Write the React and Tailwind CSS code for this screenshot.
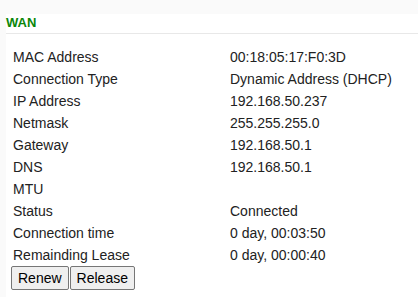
export default function App() {
  const rows = [
    ["MAC Address", "00:18:05:17:F0:3D"],
    ["Connection Type", "Dynamic Address (DHCP)"],
    ["IP Address", "192.168.50.237"],
    ["Netmask", "255.255.255.0"],
    ["Gateway", "192.168.50.1"],
    ["DNS", "192.168.50.1"],
    ["MTU", ""],
    ["Status", "Connected"],
    ["Connection time", "0 day, 00:03:50"],
    ["Remainding Lease", "0 day, 00:00:40"],
  ];
  return (
    <div
      className="w-[418px] h-[297px] bg-[#fafafa] pt-[14px] pl-[6px] overflow-hidden text-[#222]"
      style={{ fontFamily: '"Liberation Sans", Arial, sans-serif' }}
    >
      <div className="bg-white h-full">
        <div className="h-[20px] border-b border-[#e8e8e8] text-[13px] font-bold text-[#0a870a] leading-[14px] pt-[2px]">
          WAN
        </div>
        <div className="pt-[12px] pl-[7px]">
          {rows.map(([k, v]) => (
            <div key={k} className="grid grid-cols-[217px_1fr] h-[22px] leading-[22px] text-[14px]">
              <div>{k}</div>
              <div>{v}</div>
            </div>
          ))}
          <div className="flex gap-[1px] -ml-[2px]">
            <button className="h-[24px] px-[6px] text-[14px] bg-[#efefef] border border-[#767676] rounded-[2px] text-black leading-[16px]">
              Renew
            </button>
            <button className="h-[24px] px-[6px] text-[14px] bg-[#efefef] border border-[#767676] rounded-[2px] text-black leading-[16px]">
              Release
            </button>
          </div>
        </div>
      </div>
    </div>
  );
}
